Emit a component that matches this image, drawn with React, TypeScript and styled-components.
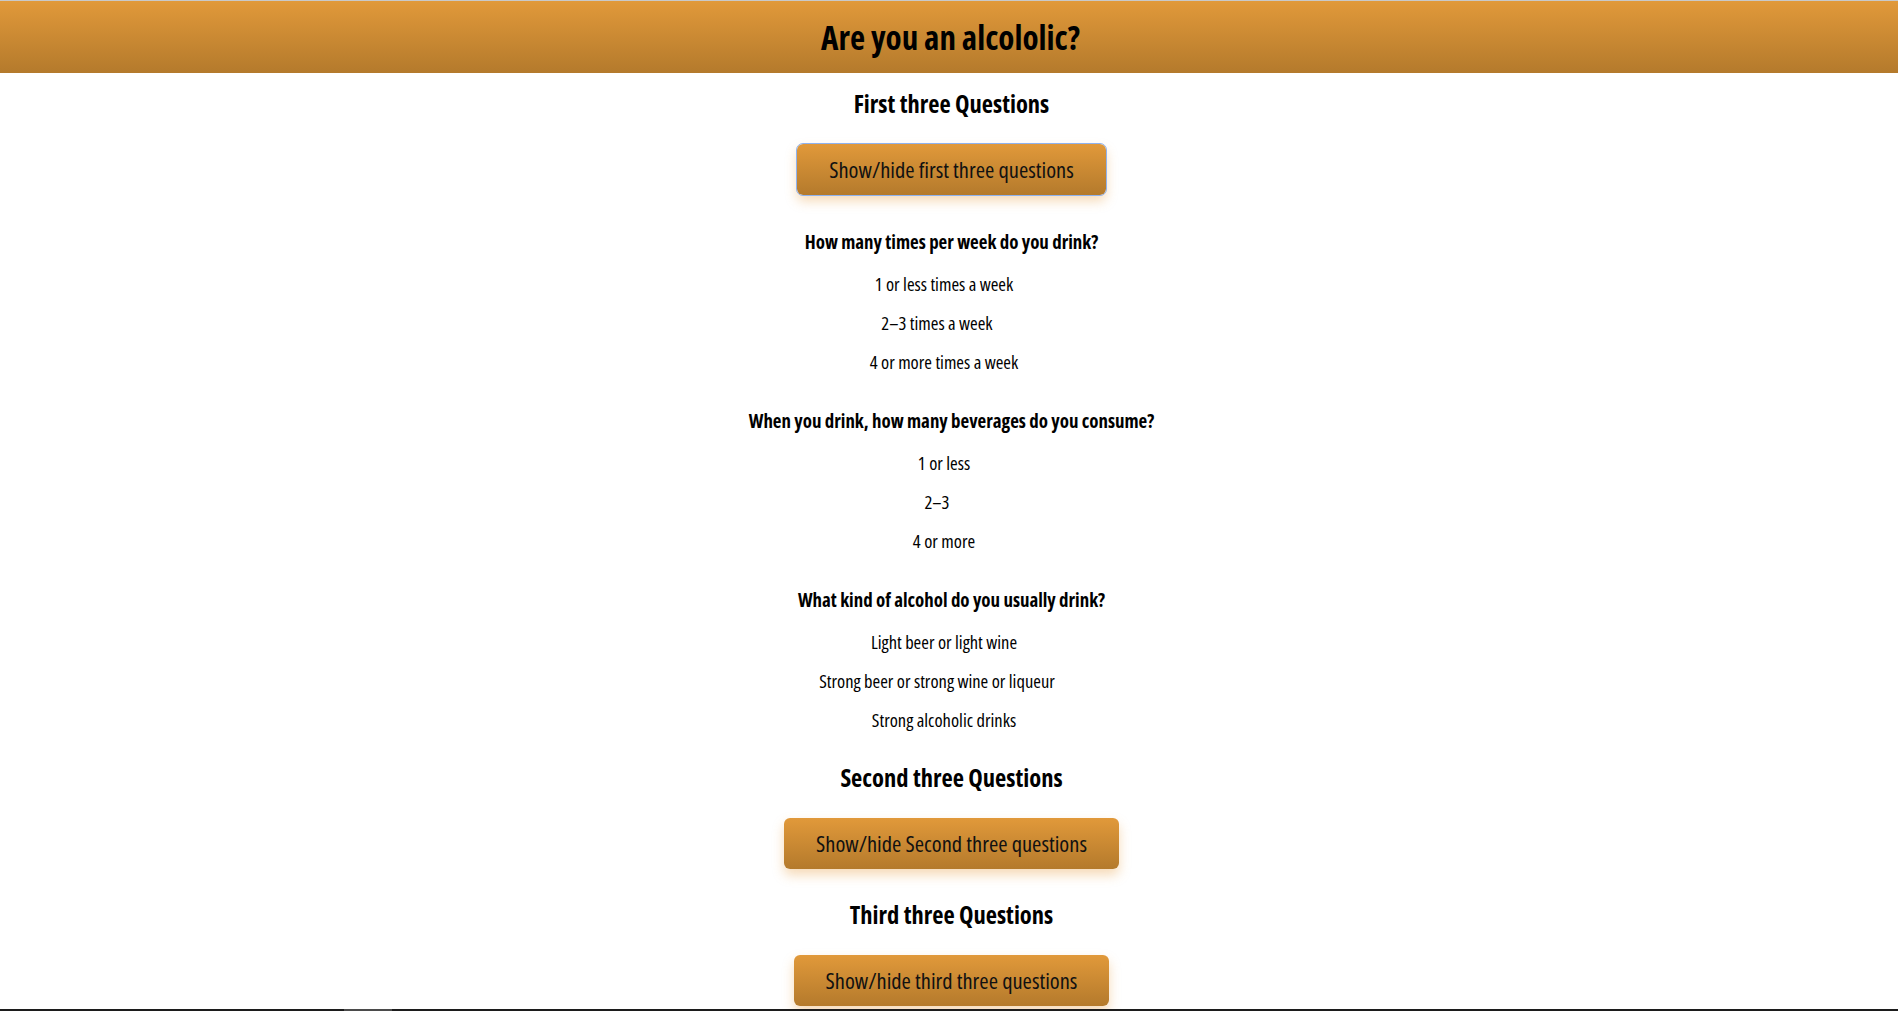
import React from "react";
import styled, { createGlobalStyle } from "styled-components";

const FONT = `"Open Sans", "Roboto", "Liberation Sans", sans-serif`;

const GlobalStyle = createGlobalStyle`
  html, body {
    margin: 0;
    padding: 0;
    background: #ffffff;
  }
  body {
    font-family: ${FONT};
    font-stretch: 75%;
    color: #000000;
  }
`;

const Header = styled.header`
  height: 72px;
  border-top: 1px solid #c9c9c9;
  background: linear-gradient(to bottom, #e1993a 0%, #b47a2c 100%);
  display: flex;
  align-items: center;
  justify-content: center;
  padding-left: 3px;
`;

const Title = styled.h1`
  margin: 0;
  font-size: 33px;
  line-height: 1;
  font-weight: 700;
  font-stretch: 75%;
`;

const Main = styled.main`
  display: flex;
  flex-direction: column;
  align-items: center;
  padding: 16px 0 40px 5px;
`;

const Section = styled.section<{ $first?: boolean }>`
  display: flex;
  flex-direction: column;
  align-items: center;
  margin-top: ${(p) => (p.$first ? "0" : "31px")};
`;

const SectionTitle = styled.h2`
  margin: 0 0 25px;
  font-size: 24.5px;
  line-height: 30px;
  font-weight: 700;
  font-stretch: 75%;
`;

const ToggleButton = styled.button<{ $focused?: boolean }>`
  height: 51px;
  padding: 0 32px;
  border: none;
  border-radius: 6px;
  background: linear-gradient(to bottom, #e1993a 0%, #b47a2c 100%);
  box-shadow: 0 6px 12px rgba(230, 150, 50, 0.35);
  font-family: ${FONT};
  font-stretch: 75%;
  font-size: 22.5px;
  font-weight: 500;
  color: #111111;
  cursor: pointer;
  outline: ${(p) => (p.$focused ? "1px solid #8fb2ee" : "none")};
  outline-offset: 0;
`;

const QuestionGroup = styled.div`
  display: flex;
  flex-direction: column;
  align-items: center;
  margin-top: 35px;
`;

const Question = styled.h3`
  margin: 0 0 18px;
  font-size: 18.9px;
  line-height: 24px;
  font-weight: 700;
  font-stretch: 75%;
`;

const OptionList = styled.div`
  display: flex;
  flex-direction: column;
  align-items: center;
  gap: 15px;
`;

const Option = styled.label<{ $trail: number }>`
  font-size: 18.5px;
  line-height: 24px;
  font-weight: 500;
  font-stretch: 75%;
  padding-right: ${(p) => p.$trail}px;
`;

const BottomBar = styled.div`
  position: fixed;
  left: 0;
  right: 0;
  bottom: 0;
  height: 2px;
  background: #1c1c1c;
`;

const BarThumb = styled.div`
  position: absolute;
  left: 344px;
  top: 0;
  width: 48px;
  height: 2px;
  background: #4b4b4b;
`;

const questions = [
  {
    q: "How many times per week do you drink?",
    options: ["1 or less times a week", "2–3 times a week", "4 or more times a week"],
  },
  {
    q: "When you drink, how many beverages do you consume?",
    options: ["1 or less", "2–3", "4 or more"],
  },
  {
    q: "What kind of alcohol do you usually drink?",
    options: ["Light beer or light wine", "Strong beer or strong wine or liqueur", "Strong alcoholic drinks"],
  },
];

export default function App() {
  return (
    <>
      <GlobalStyle />
      <Header>
        <Title>Are you an alcololic?</Title>
      </Header>
      <Main>
        <Section $first>
          <SectionTitle>First three Questions</SectionTitle>
          <ToggleButton $focused>Show/hide first three questions</ToggleButton>
          {questions.map((item) => (
            <QuestionGroup key={item.q}>
              <Question>{item.q}</Question>
              <OptionList>
                {item.options.map((o, i) => (
                  <Option key={o} $trail={i === 1 ? 29 : 15}>
                    {o}
                  </Option>
                ))}
              </OptionList>
            </QuestionGroup>
          ))}
        </Section>
        <Section>
          <SectionTitle>Second three Questions</SectionTitle>
          <ToggleButton>Show/hide Second three questions</ToggleButton>
        </Section>
        <Section>
          <SectionTitle>Third three Questions</SectionTitle>
          <ToggleButton>Show/hide third three questions</ToggleButton>
        </Section>
      </Main>
      <BottomBar>
        <BarThumb />
      </BottomBar>
    </>
  );
}
